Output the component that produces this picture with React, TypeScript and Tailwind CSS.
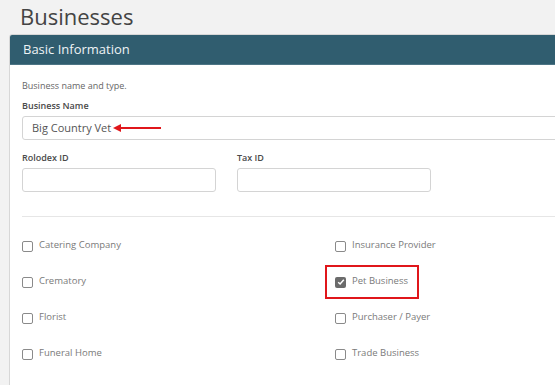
const left = ['Catering Company', 'Crematory', 'Florist', 'Funeral Home'];
const right = ['Insurance Provider', 'Pet Business', 'Purchaser / Payer', 'Trade Business'];

function Box({ checked = false }: { checked?: boolean }) {
  if (checked) {
    return (
      <span className="w-[11px] h-[11px] rounded-[2px] bg-[#6b6b6b] flex items-center justify-center shrink-0">
        <svg width="8" height="8" viewBox="0 0 8 8">
          <path d="M1.2 4.2 L3.1 6 L6.8 1.8" fill="none" stroke="#fff" strokeWidth="1.5" />
        </svg>
      </span>
    );
  }
  return <span className="w-[11px] h-[11px] rounded-[2px] border border-[#8a8a8a] bg-white shrink-0" />;
}

function Check({ label, checked, highlight }: { label: string; checked?: boolean; highlight?: boolean }) {
  return (
    <div className="h-[36px] flex items-center">
      <div className={highlight ? 'relative flex items-center gap-[6px]' : 'flex items-center gap-[6px]'}>
        <Box checked={checked} />
        <span className="text-[9.5px] text-[#7a7a7a] leading-none -mt-[2px]">{label}</span>
        {highlight && (
          <span className="absolute left-[-10px] top-[-12px] w-[94px] h-[34px] border-2 border-[#e0161b]" />
        )}
      </div>
    </div>
  );
}

export default function App() {
  return (
    <div className="w-[555px] h-[385px] overflow-hidden bg-[#f2f2f2] font-['Open_Sans',sans-serif]">
      <h1 className="pl-[20px] pt-[1px] h-[34px] text-[22px] leading-[30px] text-[#444] font-normal">
        Businesses
      </h1>
      <div className="ml-[9px] w-[600px] h-[370px] bg-white border border-[#d7d7d7] rounded-tl-[3px] overflow-hidden">
        <div className="h-[30px] bg-[#305d6f] border-b border-[#4d7585] flex items-center pl-[13px] text-[13px] text-[#eef3f5]">
          Basic Information
        </div>
        <div className="pl-[12px]">
          <p className="pt-[15px] text-[9px] text-[#666] leading-[12px]">Business name and type.</p>
          <p className="mt-[8px] text-[9px] font-semibold text-[#4a4a4a] leading-[12px]">Business Name</p>
          <div className="relative mt-[4px] h-[24px] border border-[#d4d4d4] rounded-[3px] flex items-center pl-[9px] text-[11px] text-[#555]">
            Big Country Vet
            <svg className="absolute left-[90px] top-[6px]" width="50" height="10" viewBox="0 0 50 10">
              <path d="M6 5 H48" stroke="#e0161b" strokeWidth="2" />
              <path d="M0 5 L8 1 L8 9 Z" fill="#e0161b" />
            </svg>
          </div>
          <div className="mt-[12px] flex gap-[21px]">
            <div className="w-[194px]">
              <p className="text-[9px] font-semibold text-[#4a4a4a] leading-[12px]">Rolodex ID</p>
              <div className="mt-[4px] h-[24px] border border-[#d4d4d4] rounded-[3px]" />
            </div>
            <div className="w-[194px]">
              <p className="text-[9px] font-semibold text-[#4a4a4a] leading-[12px]">Tax ID</p>
              <div className="mt-[4px] h-[24px] border border-[#d4d4d4] rounded-[3px]" />
            </div>
          </div>
          <div className="mt-[24px] border-t border-[#e6e6e6]" />
          <div className="mt-[11px] grid grid-cols-[313px_1fr]">
            <div className="flex flex-col">
              {left.map((l) => (
                <Check key={l} label={l} />
              ))}
            </div>
            <div className="flex flex-col">
              {right.map((r) => (
                <Check key={r} label={r} checked={r === 'Pet Business'} highlight={r === 'Pet Business'} />
              ))}
            </div>
          </div>
        </div>
      </div>
    </div>
  );
}
